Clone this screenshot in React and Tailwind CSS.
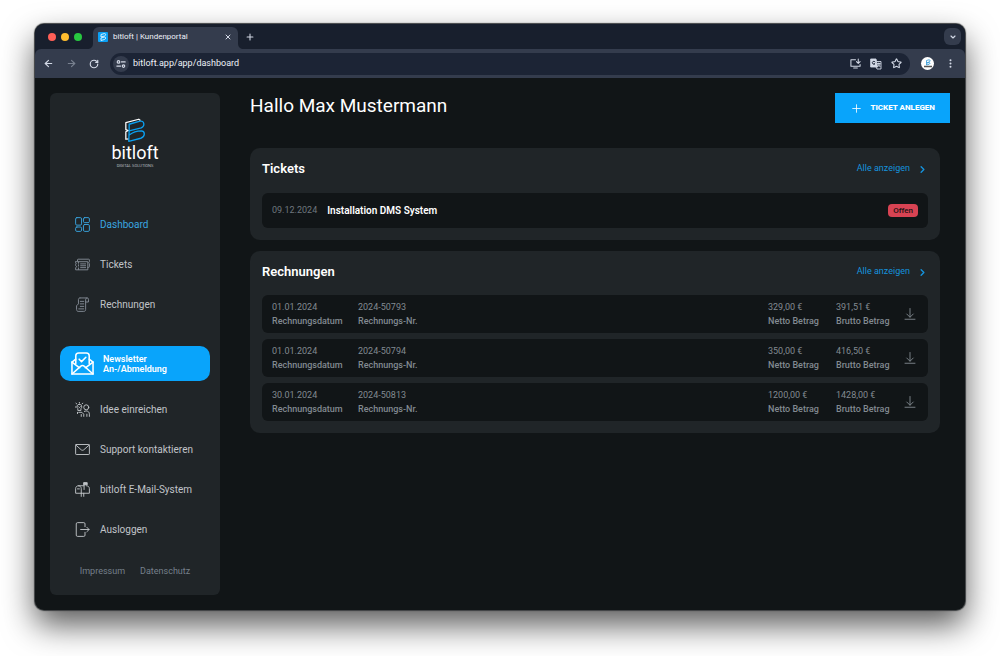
import {
  ArrowLeft,
  ArrowRight,
  ChevronDown,
  ChevronRight,
  EllipsisVertical,
  Plus,
  RotateCw,
  Star,
  X,
} from "lucide-react";

function Icon({ className, children, strokeWidth = 1.5 }) {
  return (
    <svg
      viewBox="0 0 24 24"
      className={className}
      fill="none"
      stroke="currentColor"
      strokeWidth={strokeWidth}
      strokeLinecap="round"
      strokeLinejoin="round"
      aria-hidden="true"
    >
      {children}
    </svg>
  );
}

const icons = {
  dashboard: (
    <>
      <rect x="1" y="1" width="9.500" height="12" rx="2" />
      <rect x="13.500" y="1" width="9.500" height="8" rx="2" />
      <rect x="1" y="16" width="9.500" height="7" rx="2" />
      <rect x="13.500" y="12" width="9.500" height="11" rx="2" />
    </>
  ),
  tickets: (
    <>
      <path d="M4 6.500V4.500a1 1 0 0 1 1-1h17a1 1 0 0 1 1 1v3c-1.300.4-1.300 2.600 0 3v5a1 1 0 0 1-1 1h-1.500" />
      <path d="M1 7.500h19.500V20.500H1v-3.500c2-.5 2-2.700 0-3.200v-2c1.600-.5 1.600-1.800 0-2.300z" />
      <path d="M5.500 8v2M5.500 12.500v2M5.500 17.500v2.500M9 11h8M9 14h8M9 17h8" />
    </>
  ),
  invoices: (
    <>
      <path d="M8 1.500h11.500c1.500 0 2 1.200 2 3V8h-4.500M8 1.500c-1.500 0-2.500 1-2.500 2.500v7L2.500 14v6c0 1.500 1 3 2.500 3h9c2 0 3-1 3-3V4.500c0-1.800.8-3 2.500-3" />
      <path d="M8.500 7h5.500M8.500 11h5.500M8.500 15h5.500M6 19h8" />
    </>
  ),
  newsletter: (
    <>
      <path d="M5 12V4a3 3 0 0 1 3-3h8a3 3 0 0 1 3 3v8" />
      <path d="M5 7.500 1 10.500V23h22V10.500l-4-3" />
      <path d="m1 10.500 8 6M23 10.500l-8 6M1 23l9-8c1.200-1 2.800-1 4 0l9 8" />
      <path d="m8.500 7.500 2.500 2.500 4.500-4.500" />
    </>
  ),
  idea: (
    <>
      <path d="M7 3.500a4 4 0 0 0-2.500 7v3h5v-3a4 4 0 0 0-2.500-7zM7 .5v.5M1.500 2l1.300 1M12.500 2l-1.300 1M.5 8h1M5.500 7.500 7 9l1.500-1.500" />
      <circle cx="18" cy="8.500" r="4" />
      <path d="M6 16.500h5l3 3V23M4 16.500v2M10 20v3M15 15c5-2 8 .5 8 4.500v3.500M19 19.500V23" />
    </>
  ),
  mail: (
    <>
      <rect x="1" y="4" width="22" height="16" rx="1" />
      <path d="m1.500 5 8.500 7.500c1.200 1 2.800 1 4 0L22.500 5" />
    </>
  ),
  mailbox: (
    <>
      <path d="M14 6H5.500C3 6 1 8 1 10.500V18h22v-7.500C23 8 21 6 18.500 6" />
      <path d="M5.500 6C8 6 10 8 10 10.500V18M4 11h3M10 18v5M14 18v5M14.500 12V1.500" />
      <path d="M14.500 1h5v3.500h-5z" fill="currentColor" />
    </>
  ),
  logout: (
    <>
      <path d="M16 7.500V3a2 2 0 0 0-2-2H4a2 2 0 0 0-2 2v18a2 2 0 0 0 2 2h10a2 2 0 0 0 2-2v-4.500" />
      <path d="M9 12h13.500M19 8.500l3.500 3.500-3.500 3.500" />
    </>
  ),
  download: <path d="M12 1v17M5.500 12l6.500 6.500 6.500-6.500M2 22.500h20" />,
};

const mainNav = [
  { label: "Dashboard", icon: "dashboard", active: true },
  { label: "Tickets", icon: "tickets", muted: true },
  { label: "Rechnungen", icon: "invoices", muted: true },
];

const serviceNav = [
  { label: "Idee einreichen", icon: "idea" },
  { label: "Support kontaktieren", icon: "mail" },
  { label: "bitloft E-Mail-System", icon: "mailbox" },
  { label: "Ausloggen", icon: "logout" },
];

const invoices = [
  { date: "01.01.2024", number: "2024-50793", net: "329,00 €", gross: "391,51 €" },
  { date: "01.01.2024", number: "2024-50794", net: "350,00 €", gross: "416,50 €" },
  { date: "30.01.2024", number: "2024-50813", net: "1200,00 €", gross: "1428,00 €" },
];

function BrandMark({ className }) {
  return (
    <svg viewBox="0 0 26 30" className={className} fill="none" strokeLinejoin="round" aria-hidden="true">
      <path
        d="M5.500 25 2 25.500V16.500L5 15 2 14V5.500L17.500 1.500 19.500 3"
        stroke="#fff"
        strokeWidth="1.500"
      />
      <path
        d="M6 15V7.500L19 3.800c5-1.200 6.500 5.700 1.500 8L6 15.500l-.5 12.500L20 24.300c5.500-2 5.500-8.500.5-8.800-3 0-10 1.500-14.500 5"
        stroke="#0a9fef"
        strokeWidth="1.600"
      />
    </svg>
  );
}

function Logo() {
  return (
    <div className="flex h-[50px] flex-col items-center text-white">
      <BrandMark className="h-[28px] w-[26px]" />
      <span className="text-[18px] leading-[20px]">bitloft</span>
      <span className="text-[4px] leading-[5px] text-[#b8bcc0]">DIGITAL SOLUTIONS</span>
    </div>
  );
}

function BrowserChrome() {
  return (
    <header className="bg-[#181f2d] text-[#d3d9e6]">
      <div className="flex h-[25px] items-end pr-1 pl-[13px]">
        <div className="flex h-[25px] items-center gap-[5px]">
          <span className="size-2 rounded-full bg-[#ff5f57]" />
          <span className="size-2 rounded-full bg-[#febc2e]" />
          <span className="size-2 rounded-full bg-[#28c840]" />
        </div>
        <div className="ml-[5px] flex items-end">
          <svg viewBox="0 0 6 6" className="size-[6px]" fill="#343c4d" aria-hidden="true">
            <path d="M6 0v6H0c4 0 6-2 6-6z" />
          </svg>
          <div className="flex h-[22px] w-[145px] items-center rounded-t-md bg-[#343c4d] pr-[6px] pb-[3px] pl-[5px]">
            <span className="flex size-[10px] items-center justify-center rounded-[1px] bg-[#0aa0f5]">
              <svg viewBox="0 0 10 10" className="size-[10px]" fill="none" stroke="#fff" aria-hidden="true">
                <path d="M3 2.500 6.500 1.500c1.500 0 1.500 2 0 2.500L3 5V2.500M3 8.500V6l3.500-1c1.500 0 1.500 2 0 2.500z" strokeWidth=".8" />
              </svg>
            </span>
            <span className="ml-[5px] flex-1 text-[8px] leading-[10px] whitespace-nowrap text-[#eef1f7]">
              bitloft | Kundenportal
            </span>
            <button type="button" aria-label="Tab schließen">
              <X className="size-[8px]" strokeWidth={3} />
            </button>
          </div>
          <svg viewBox="0 0 6 6" className="size-[6px]" fill="#343c4d" aria-hidden="true">
            <path d="M0 0v6h6C2 6 0 4 0 0z" />
          </svg>
        </div>
        <button type="button" aria-label="Neuer Tab" className="flex h-[25px] items-center pl-px">
          <Plus className="size-[10px]" strokeWidth={2.5} />
        </button>
        <button
          type="button"
          aria-label="Tabs durchsuchen"
          className="mb-1 ml-auto flex size-[17px] items-center justify-center rounded-md bg-[#343c4d]"
        >
          <ChevronDown className="size-[8px]" strokeWidth={3.5} />
        </button>
      </div>

      <div className="flex h-[29px] items-center rounded-t-md bg-[#343c4d] pr-[9px] pl-2">
        <button type="button" aria-label="Zurück" className="w-[23px]">
          <ArrowLeft className="size-[11px]" strokeWidth={2.5} />
        </button>
        <button type="button" aria-label="Vorwärts" className="w-[23px] text-[#78808f]">
          <ArrowRight className="size-[11px]" strokeWidth={2.5} />
        </button>
        <button type="button" aria-label="Neu laden" className="w-[21px]">
          <RotateCw className="size-[10px]" strokeWidth={2.8} />
        </button>
        <div className="flex h-[22px] flex-1 items-center rounded-full bg-[#1c2435] pr-[8px] pl-[3px]">
          <span className="flex size-[16px] items-center justify-center rounded-full bg-[#343c4d]">
            <Icon className="size-[10px]" strokeWidth={2.8}>
              <circle cx="6" cy="7" r="3" />
              <path d="M13 7h9M2 17h9" />
              <circle cx="18" cy="17" r="3" />
            </Icon>
          </span>
          <input
            type="text"
            readOnly
            aria-label="Adresse"
            value="bitloft.app/app/dashboard"
            className="ml-1 min-w-0 flex-1 bg-transparent text-[9px] text-[#eef1f7] outline-none"
          />
          <div className="flex items-center gap-[9px]">
            <button type="button" aria-label="App installieren">
              <Icon className="size-[11px]" strokeWidth={2.3}>
                <path d="M12 4H2v14h20v-4M8 22h8M18 2v9M14 8l4 4 4-4" />
              </Icon>
            </button>
            <button type="button" aria-label="Seite übersetzen">
              <Icon className="size-[12px]" strokeWidth={1.8}>
                <path d="M2 2h10l3 16H2z" fill="currentColor" />
                <path d="M14 7h8v15h-8l-2-4M15 11h5M17.500 10v2M16 12c0 3 3 5 4 5M20 11c0 3-2 5-4 6" />
                <path d="M10 7.500a3 3 0 1 0 0 4H8" stroke="#1c2435" />
              </Icon>
            </button>
            <button type="button" aria-label="Lesezeichen">
              <Star className="size-[11px]" strokeWidth={2.4} />
            </button>
          </div>
        </div>
        <button
          type="button"
          aria-label="Profil"
          className="ml-[11px] flex size-[13px] flex-col items-center justify-center rounded-full bg-white"
        >
          <svg viewBox="0 0 12 12" className="size-[12px]" fill="none" aria-hidden="true">
            <path d="M4.500 2.500 7 1.800c1.500 0 1.500 1.700 0 2.200L4.500 5V2.500M4.500 7V5.300L7 4.500c1.500.3 1 1.500 0 1.800z" stroke="#2b95d6" strokeWidth=".8" />
            <path d="M2 8.500h8" stroke="#555" strokeWidth="1.300" />
          </svg>
        </button>
        <button type="button" aria-label="Menü" className="ml-[11px]">
          <EllipsisVertical className="size-[11px]" strokeWidth={2.4} />
        </button>
      </div>
    </header>
  );
}

function NavItem({ label, icon, active, muted }) {
  return (
    <li>
      <a
        href="#"
        className={`flex h-10 items-center gap-[10px] px-[15px] text-[10px] ${
          active ? "text-[#3aa5e0]" : "text-[#c0c4c8]"
        }`}
      >
        <Icon className={muted ? "size-[15px] text-[#848c95]" : "size-[15px]"}>
          {icons[icon]}
        </Icon>
        {label}
      </a>
    </li>
  );
}

function Sidebar() {
  return (
    <aside className="flex w-[170px] shrink-0 flex-col rounded-md bg-[#202528] px-[10px] pt-[25px] pb-[17px]">
      <Logo />
      <nav className="mt-[36px]">
        <ul>
          {mainNav.map((item) => (
            <NavItem key={item.label} {...item} />
          ))}
        </ul>
        <a
          href="#"
          className="mt-[22px] mb-2 flex h-[35px] items-center gap-[9px] rounded-[10px] bg-[#09a4fb] px-[11px] text-[9px] leading-[10px] font-semibold text-white"
        >
          <Icon className="size-[23px]" strokeWidth={1.6}>
            {icons.newsletter}
          </Icon>
          <span>
            Newsletter
            <br />
            An-/Abmeldung
          </span>
        </a>
        <ul>
          {serviceNav.map((item) => (
            <NavItem key={item.label} {...item} />
          ))}
        </ul>
      </nav>
      <div className="mt-[15px] flex justify-center gap-[15px] text-[9px] leading-[14px] text-[#76808b]">
        <a href="#">Impressum</a>
        <a href="#">Datenschutz</a>
      </div>
    </aside>
  );
}

function Card({ title, children }) {
  return (
    <section className="rounded-[10px] bg-[#202528] p-3">
      <div className="flex h-[18px] items-center justify-between">
        <h2 className="text-[13px] font-semibold text-white">{title}</h2>
        <a href="#" className="flex items-center gap-[7px] text-[9px] text-[#1593dd]">
          Alle anzeigen
          <ChevronRight className="size-[11px]" strokeWidth={3} />
        </a>
      </div>
      {children}
    </section>
  );
}

function Field({ label, value, className }) {
  return (
    <div className={`flex flex-col-reverse ${className}`}>
      <dt className="font-medium">{label}</dt>
      <dd>{value}</dd>
    </div>
  );
}

function InvoiceRow({ date, number, net, gross }) {
  return (
    <li className="flex items-center rounded-md bg-[#111517] py-[5px] pr-3 pl-[10px] text-[#828a91]">
      <dl className="flex flex-1 text-[9px] leading-[14px]">
        <Field label="Rechnungsdatum" value={date} className="w-[86px]" />
        <Field label="Rechnungs-Nr." value={number} className="mr-auto" />
        <Field label="Netto Betrag" value={net} className="w-[68px]" />
        <Field label="Brutto Betrag" value={gross} className="w-[68px]" />
      </dl>
      <button type="button" aria-label={`Rechnung ${number} herunterladen`}>
        <Icon className="size-[12px]" strokeWidth={1.8}>
          {icons.download}
        </Icon>
      </button>
    </li>
  );
}

function Dashboard() {
  return (
    <main className="min-w-0 flex-1">
      <div className="flex items-start justify-between">
        <h1 className="text-[19px] leading-[26px] text-white">Hallo Max Mustermann</h1>
        <button
          type="button"
          className="flex h-[30px] items-center gap-[7px] bg-[#09a4fb] px-[15px] text-[8px] font-extrabold text-white"
        >
          <Plus className="size-[13px]" strokeWidth={1.5} />
          TICKET ANLEGEN
        </button>
      </div>

      <div className="mt-[25px] mr-[10px] flex flex-col gap-[11px]">
        <Card title="Tickets">
          <div className="mt-[15px] flex h-[35px] items-center gap-[10px] rounded-md bg-[#111517] px-[10px]">
            <time className="text-[9px] text-[#6f777e]">09.12.2024</time>
            <a href="#" className="text-[10px] font-semibold text-white">
              Installation DMS System
            </a>
            <span className="ml-auto rounded-sm bg-[#d84353] px-[5px] text-[8px] leading-[13px] font-medium text-[#1c1214]">
              Offen
            </span>
          </div>
        </Card>
        <Card title="Rechnungen">
          <ul className="mt-[14px] flex flex-col gap-[6px]">
            {invoices.map((invoice) => (
              <InvoiceRow key={invoice.number} {...invoice} />
            ))}
          </ul>
        </Card>
      </div>
    </main>
  );
}

export default function App() {
  return (
    <div className="min-h-screen bg-white px-[35px] pt-6 pb-[46px] font-[Roboto,sans-serif]">
      <div className="overflow-hidden rounded-[9px] bg-[#111517] shadow-[0_0_1px_1px_#3d4042,0_15px_32px_rgba(0,0,0,0.65)]">
        <BrowserChrome />
        <div className="flex gap-[30px] p-[15px]">
          <Sidebar />
          <Dashboard />
        </div>
      </div>
    </div>
  );
}
